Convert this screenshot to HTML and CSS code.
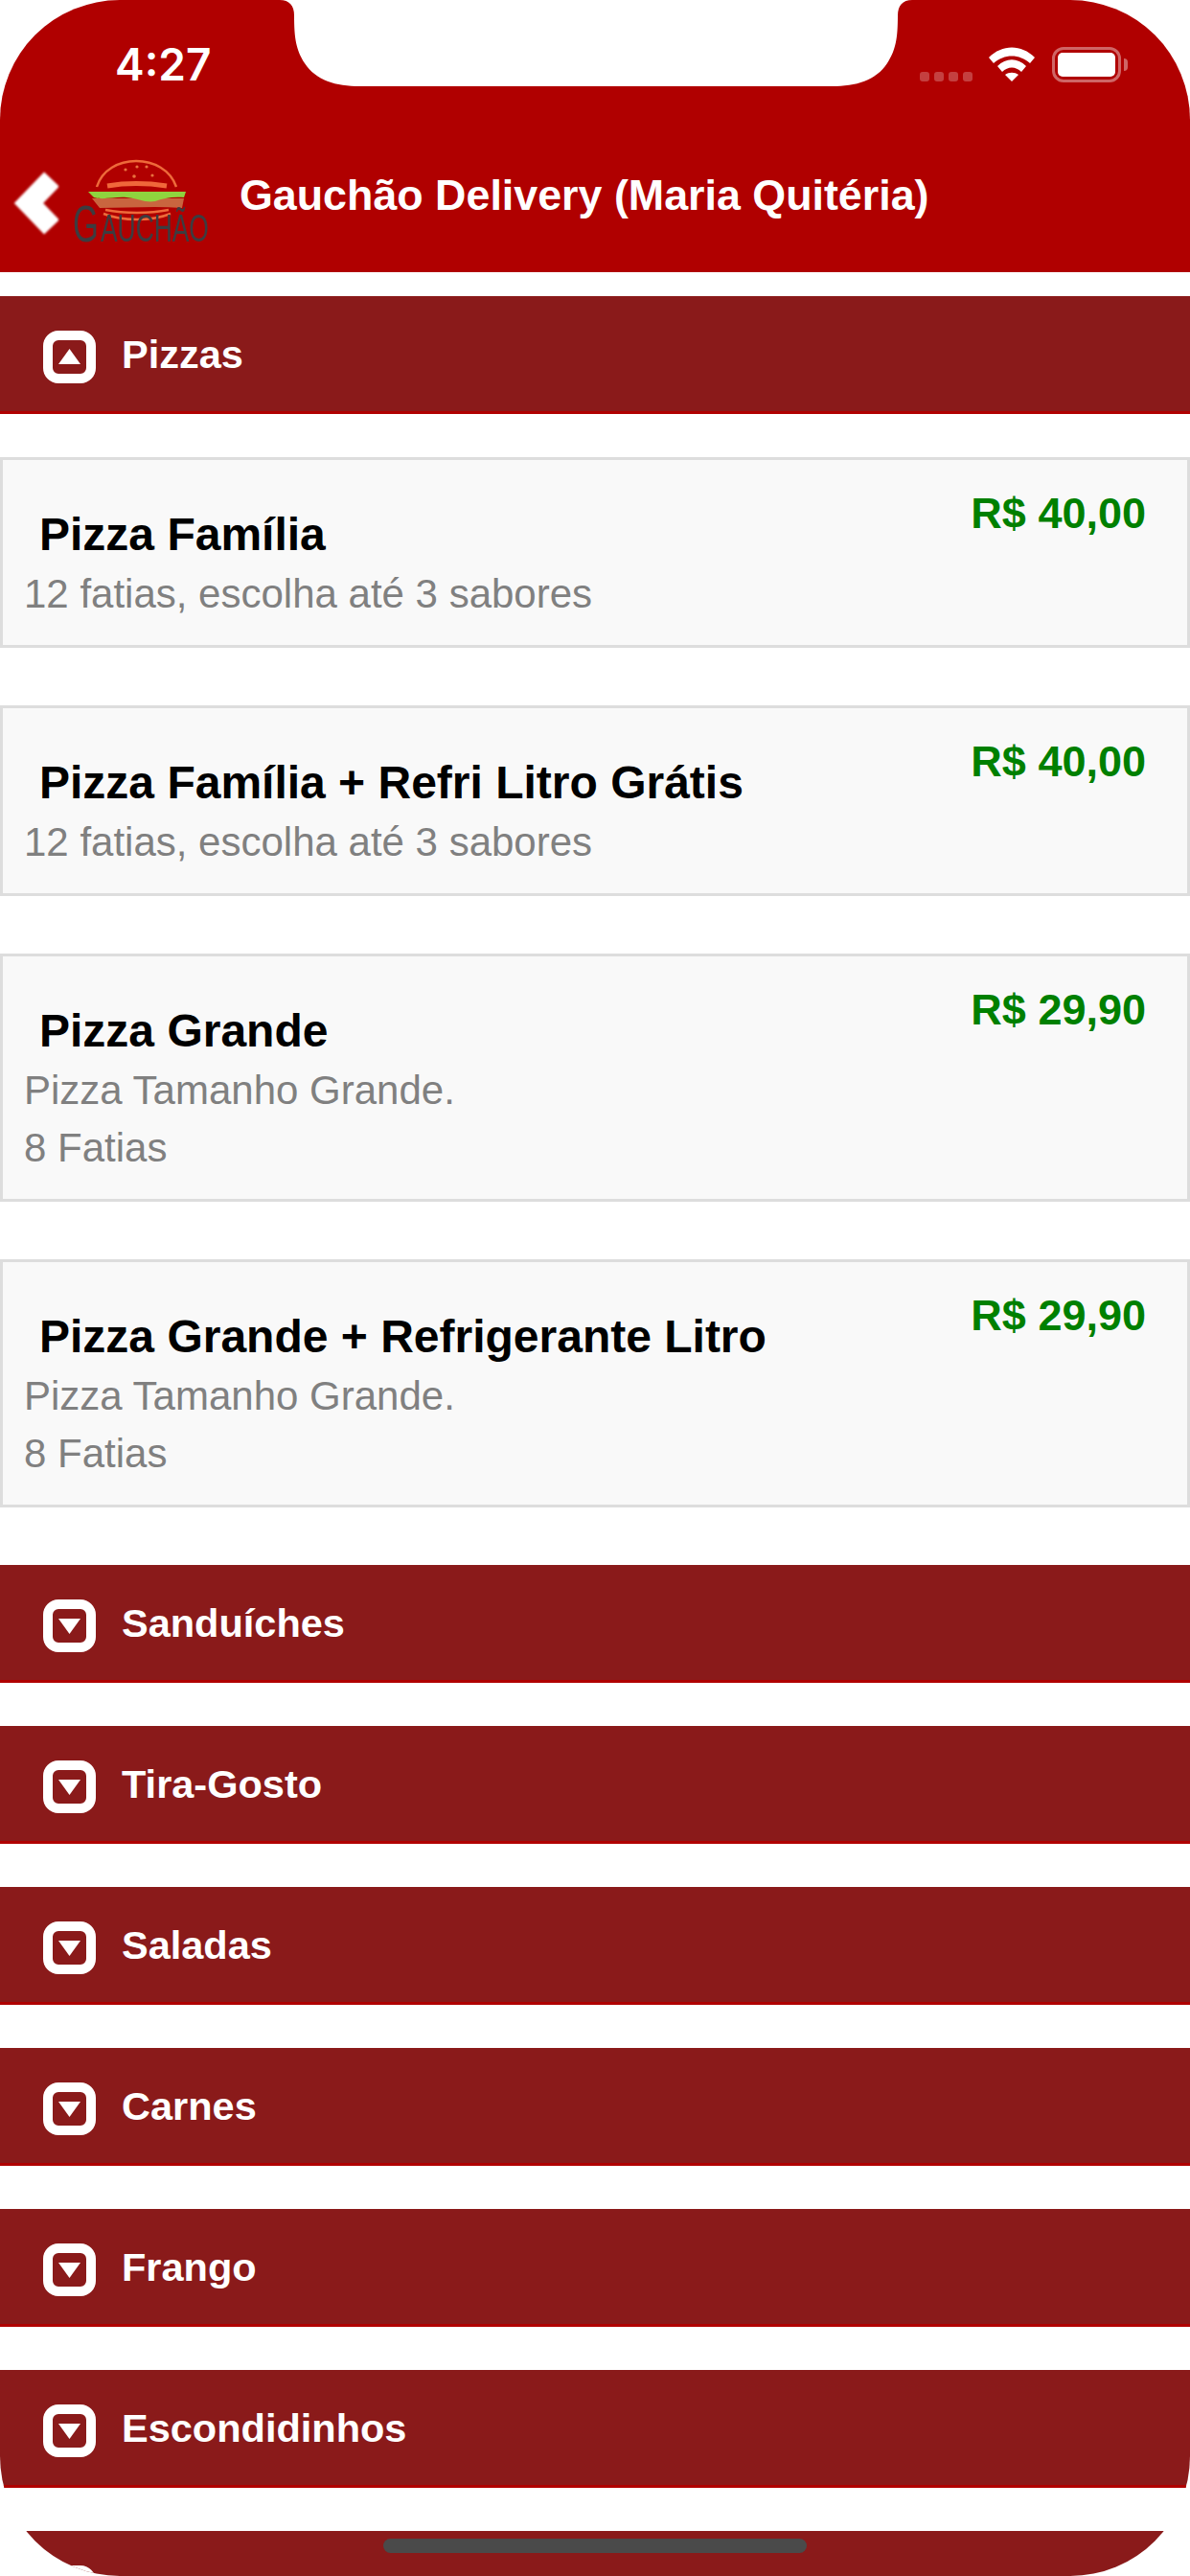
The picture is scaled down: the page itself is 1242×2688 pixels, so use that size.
FILE: index.html
```html
<!DOCTYPE html>
<html lang="pt-BR">
<head>
    <meta charset="UTF-8">
    <title>Gauchão Delivery</title>
    <link rel="stylesheet" href="styles.css">
</head>
<body>
    <div class="screen">
        <header class="appbar">
            <div class="statusbar">
                <svg class="notch" viewBox="0 0 660 90"><path d="M0 0C10 0 15 6 15 16C15 40 17 52 26 66C38 84 58 90 84 90H576C602 90 622 84 634 66C643 52 645 40 645 16C645 6 650 0 660 0Z"/></svg>
                <span class="clock">4:27</span>
                <div class="status-icons">
                    <div class="signal"><i></i><i></i><i></i><i></i></div>
                    <svg class="wifi" viewBox="0 0 48 36">
                        <path d="M0 11C14 -3 34 -3 48 11L43 17C32 7 16 7 5 17Z"/>
                        <path d="M9 20C18 11 30 11 39 20L34 26C28 20 20 20 14 26Z"/>
                        <path d="M17 29C21 26 27 26 31 29L24 36Z"/>
                    </svg>
                    <div class="battery"><div class="battery-level"></div></div>
                    <div class="battery-nub"></div>
                </div>
            </div>
            <nav class="navbar">
                <svg class="back" viewBox="0 0 50 72"><path d="M43 11L19 36L43 61"/></svg>
                <svg class="logo" viewBox="0 0 150 100">
                    <path class="bun" d="M29 30C40 -6 100 -6 112 30"/>
                    <g class="seeds">
                        <circle cx="59" cy="12" r="1.6"/><circle cx="71" cy="9" r="1.6"/><circle cx="81" cy="9" r="1.6"/>
                        <circle cx="68" cy="19" r="1.8"/><circle cx="87" cy="18" r="1.6"/>
                    </g>
                    <path class="patty" d="M40 29C58 26 82 26 102 29"/>
                    <path class="filling" d="M24 42H120L118 52C90 50 60 52 32 52Z"/>
                    <path class="lettuce" d="M20 35H122L120 41C108 40 98 42 90 45C80 47 72 42 60 41C48 40 36 44 26 41Z"/>
                    <path class="bun-low" d="M38 54C58 58 84 58 104 54M36 58C56 66 86 66 106 58"/>
                    <text class="logo-cap" transform="translate(4 87) scale(0.64 1)">G</text>
                    <text class="logo-text" transform="translate(33 87) scale(0.66 1)">AUCHÃO</text>
                </svg>
                <h1 class="title">Gauchão Delivery (Maria Quitéria)</h1>
            </nav>
        </header>

        <main class="menu">
            <section class="category">
                <svg class="toggle" viewBox="0 0 55 55"><rect x="5" y="5" width="45" height="45" rx="11"/><path d="M27.5 19L39 35H16Z"/></svg>
                <span>Pizzas</span>
            </section>

            <div class="items">
                <article class="item">
                    <div class="price">R$ 40,00</div>
                    <h2 class="item-name">Pizza Família</h2>
                    <p class="item-desc">12 fatias, escolha até 3 sabores</p>
                </article>
                <article class="item">
                    <div class="price">R$ 40,00</div>
                    <h2 class="item-name">Pizza Família + Refri Litro Grátis</h2>
                    <p class="item-desc">12 fatias, escolha até 3 sabores</p>
                </article>
                <article class="item">
                    <div class="price">R$ 29,90</div>
                    <h2 class="item-name">Pizza Grande</h2>
                    <p class="item-desc">Pizza Tamanho Grande.</p>
                    <p class="item-desc">8 Fatias</p>
                </article>
                <article class="item">
                    <div class="price">R$ 29,90</div>
                    <h2 class="item-name">Pizza Grande + Refrigerante Litro</h2>
                    <p class="item-desc">Pizza Tamanho Grande.</p>
                    <p class="item-desc">8 Fatias</p>
                </article>
            </div>

            <section class="category">
                <svg class="toggle" viewBox="0 0 55 55"><rect x="5" y="5" width="45" height="45" rx="11"/><path d="M16 20H39L27.5 36Z"/></svg>
                <span>Sanduíches</span>
            </section>
            <section class="category">
                <svg class="toggle" viewBox="0 0 55 55"><rect x="5" y="5" width="45" height="45" rx="11"/><path d="M16 20H39L27.5 36Z"/></svg>
                <span>Tira-Gosto</span>
            </section>
            <section class="category">
                <svg class="toggle" viewBox="0 0 55 55"><rect x="5" y="5" width="45" height="45" rx="11"/><path d="M16 20H39L27.5 36Z"/></svg>
                <span>Saladas</span>
            </section>
            <section class="category">
                <svg class="toggle" viewBox="0 0 55 55"><rect x="5" y="5" width="45" height="45" rx="11"/><path d="M16 20H39L27.5 36Z"/></svg>
                <span>Carnes</span>
            </section>
            <section class="category">
                <svg class="toggle" viewBox="0 0 55 55"><rect x="5" y="5" width="45" height="45" rx="11"/><path d="M16 20H39L27.5 36Z"/></svg>
                <span>Frango</span>
            </section>
            <section class="category">
                <svg class="toggle" viewBox="0 0 55 55"><rect x="5" y="5" width="45" height="45" rx="11"/><path d="M16 20H39L27.5 36Z"/></svg>
                <span>Escondidinhos</span>
            </section>
            <section class="category">
                <svg class="toggle" viewBox="0 0 55 55"><rect x="5" y="5" width="45" height="45" rx="11"/><path d="M16 20H39L27.5 36Z"/></svg>
                <span>Massas</span>
            </section>
        </main>

        <div class="home-indicator"></div>
    </div>
</body>
</html>
```

FILE: styles.css
```css
html, body {
    margin: 0;
    background-color: #fff;
}

body {
    font-family: "Liberation Sans", Arial, sans-serif;
}

.screen {
    position: relative;
    width: 1242px;
    height: 2688px;
    overflow: hidden;
    border-radius: 125px;
    background-color: #fff;
}

/* barra de cima */
.appbar {
    height: 284px;
    background-color: #b00000;
    color: #fff;
}

.statusbar {
    position: relative;
    height: 132px;
    display: flex;
    justify-content: space-between;
}

.notch {
    position: absolute;
    top: 0;
    left: 292px;
    width: 660px;
    height: 90px;
    fill: #fff;
}

.clock {
    margin: 39px 0 0 120px;
    font-family: Inter, "Liberation Sans", sans-serif;
    font-size: 46px;
    font-weight: 600;
    line-height: 56px;
}

.status-icons {
    display: flex;
    align-items: flex-start;
    margin: 49px 65px 0 0;
}

.signal {
    display: flex;
    gap: 5px;
    margin: 26px 17px 0 0;
}

.signal i {
    width: 10px;
    height: 10px;
    border-radius: 3px;
    background-color: rgba(255, 255, 255, 0.25);
}

.wifi {
    width: 48px;
    height: 36px;
    margin-right: 18px;
    fill: #fff;
}

.battery {
    width: 72px;
    height: 37px;
    box-sizing: border-box;
    padding: 3px;
    border: 3px solid rgba(255, 255, 255, 0.4);
    border-radius: 12px;
}

.battery-level {
    height: 100%;
    border-radius: 5px;
    background-color: #fff;
}

.battery-nub {
    width: 4px;
    height: 13px;
    margin: 12px 0 0 3px;
    border-radius: 0 4px 4px 0;
    background-color: rgba(255, 255, 255, 0.4);
}

.navbar {
    display: flex;
    align-items: center;
    height: 152px;
    padding-left: 11px;
}

.back {
    width: 50px;
    height: 72px;
    margin-top: 8px;
    fill: none;
    stroke: #fff;
    stroke-width: 22;
    filter: blur(1px);
}

.logo {
    width: 150px;
    height: 100px;
    margin: 14px 0 0 11px;
    filter: blur(0.5px);
}

.logo .bun,
.logo .bun-low {
    fill: none;
    stroke: #ee6a3a;
    stroke-width: 2.5;
}

.logo .seeds {
    fill: #e8723e;
}

.logo .patty {
    fill: none;
    stroke: #f0673a;
    stroke-width: 5;
}

.logo .filling {
    fill: #c9653f;
}

.logo .lettuce {
    fill: #8fd43e;
}

.logo-text,
.logo-cap {
    font-family: "Liberation Sans", sans-serif;
    fill: #3c3c40;
}

.logo-text {
    font-size: 40px;
}

.logo-cap {
    font-size: 54px;
}

.title {
    margin: 0 0 10px 28px;
    font-size: 44.8px;
    font-weight: 700;
}

/* lista */
.menu {
    padding-top: 25px;
}

.category {
    display: flex;
    align-items: center;
    gap: 27px;
    box-sizing: border-box;
    height: 123px;
    margin-bottom: 45px;
    padding: 7px 0 0 45px;
    border-bottom: 3px solid #b00000;
    background-color: #8a1a1a;
    color: #fff;
    font-size: 41.5px;
    font-weight: 700;
}

.category span {
    margin-bottom: 5px;
}

.toggle {
    width: 55px;
    height: 55px;
    fill: #fff;
}

.toggle rect {
    fill: none;
    stroke: #fff;
    stroke-width: 10;
}

.items {
    display: flex;
    flex-direction: column;
    gap: 60px;
    margin-bottom: 60px;
}

.item {
    position: relative;
    box-sizing: border-box;
    padding: 52px 0 23px 22px;
    border: 3px solid #ddd;
    background-color: #f9f9f9;
}

.price {
    position: absolute;
    top: 30px;
    right: 43px;
    color: #008000;
    font-size: 45px;
    font-weight: 700;
    line-height: 52px;
}

.item-name {
    margin: 0 0 6px 16px;
    font-size: 48px;
    font-weight: 700;
    line-height: 52px;
}

.item-desc {
    margin: 0;
    color: #808080;
    font-size: 42px;
    line-height: 60px;
}

.home-indicator {
    position: absolute;
    left: 400px;
    top: 2649px;
    width: 442px;
    height: 15px;
    border-radius: 8px;
    background-color: #4a4a4a;
}
```
